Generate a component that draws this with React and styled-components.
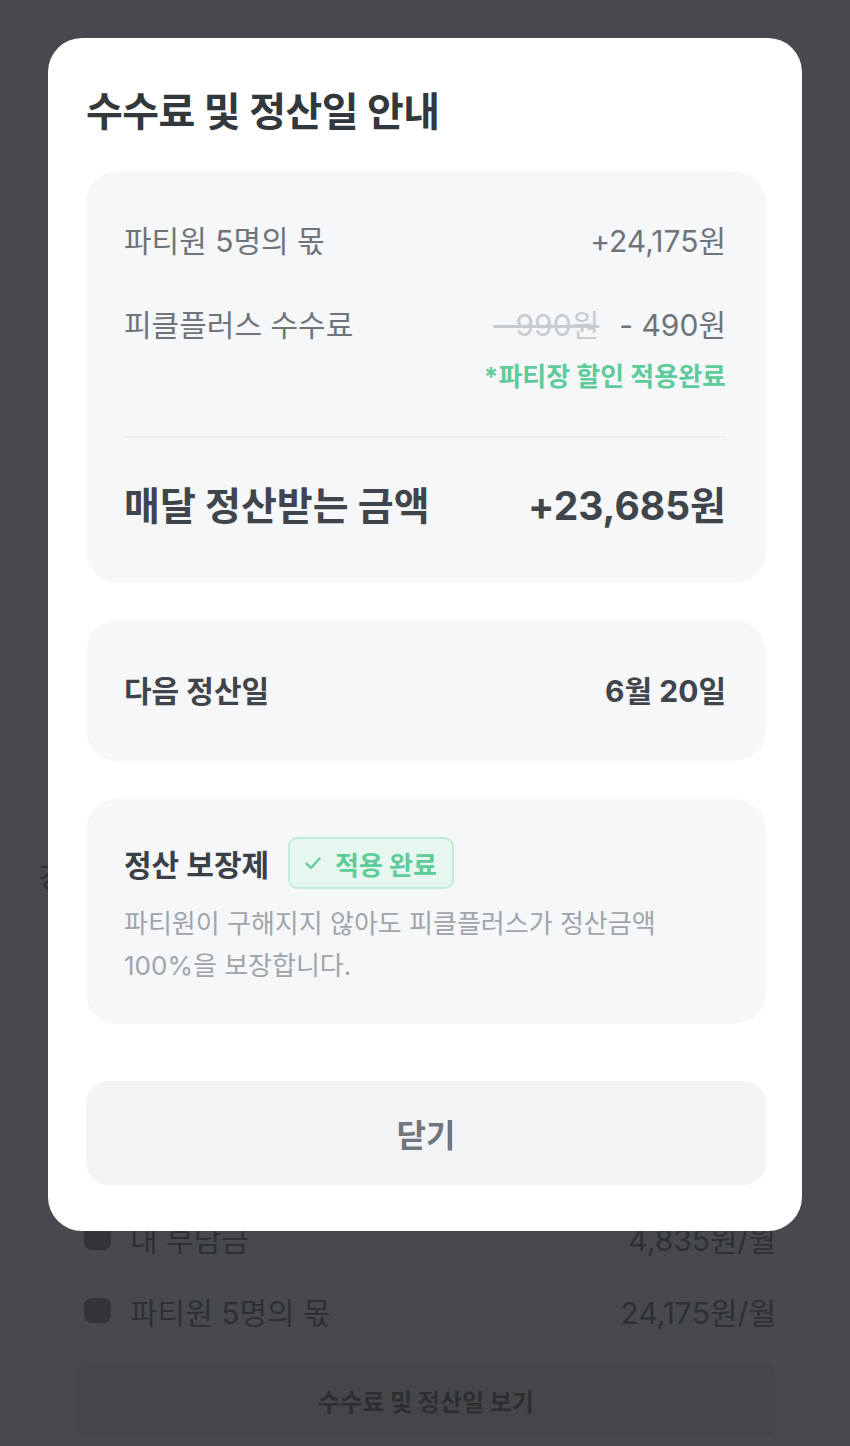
import React from "react";
import styled, { createGlobalStyle } from "styled-components";

const GlobalStyle = createGlobalStyle`
    html, body {
        margin: 0;
        padding: 0;
        background: #48494e;
    }
    body {
        font-family: "Inter", "Noto Sans CJK KR", sans-serif;
        -webkit-font-smoothing: antialiased;
    }
`;

const Page = styled.div`
    min-height: 1446px;
    box-sizing: border-box;
    display: flex;
    flex-direction: column;
    justify-content: flex-end;
    padding: 0 74px 8px 76px;
    background: #48494e;
`;

const BehindRow = styled.div`
    display: flex;
    align-items: center;
    justify-content: space-between;
    height: 73px;
    font-size: 30px;
    color: #2f3034;
`;

const BehindLabel = styled.div`
    display: flex;
    align-items: center;
    gap: 19px;
    padding-left: 8px;
`;

const Dot = styled.span`
    width: 27px;
    height: 25px;
    border-radius: 8px;
    background: #333438;
`;

const BehindButton = styled.div`
    margin-top: 16px;
    height: 75px;
    border-radius: 14px;
    background: #45464a;
    display: flex;
    align-items: center;
    justify-content: center;
    font-size: 24px;
    font-weight: 700;
    color: #2d2e31;
`;

const Peek = styled.div`
    position: absolute;
    left: 38px;
    top: 856px;
    font-size: 28px;
    color: #2f3034;
`;

const Modal = styled.div`
    position: fixed;
    top: 38px;
    left: 48px;
    width: 754px;
    box-sizing: border-box;
    padding: 52px 36px 46px 38px;
    background: #ffffff;
    border-radius: 34px;
    display: flex;
    flex-direction: column;
`;

const Title = styled.h1`
    margin: 0 0 37px;
    font-size: 40px;
    line-height: 44px;
    font-weight: 700;
    color: #33383d;
    letter-spacing: -0.5px;
`;

const Card = styled.div`
    background: #f6f7f9;
    border-radius: 32px;
    padding: ${(p) => p.$pad || "0 40px 0 38px"};
    margin-bottom: ${(p) => p.$gap || "0"};
    min-height: ${(p) => p.$h || "auto"};
    box-sizing: border-box;
    display: flex;
    flex-direction: column;
    justify-content: center;
`;

const Row = styled.div`
    display: flex;
    align-items: center;
    justify-content: space-between;
    font-size: ${(p) => p.$size || "30px"};
    line-height: ${(p) => p.$lh || "36px"};
    font-weight: ${(p) => (p.$bold ? 700 : 400)};
    color: ${(p) => p.$color || "#6f747a"};
    margin-top: ${(p) => p.$mt || "0"};
`;

const FeeValues = styled.div`
    display: flex;
    align-items: center;
    gap: 20px;
`;

const Strike = styled.span`
    color: #c7ccd0;
    text-decoration: line-through;
    text-decoration-color: #c7ccd0;
`;

const Note = styled.div`
    margin-top: 19px;
    text-align: right;
    font-size: 26px;
    line-height: 30px;
    font-weight: 700;
    color: #5ecb9b;
`;

const Divider = styled.hr`
    border: none;
    height: 2px;
    background: #eef0f2;
    margin: 44px 0 44px;
`;

const GuaranteeHead = styled.div`
    display: flex;
    align-items: center;
    gap: 19px;
`;

const GuaranteeTitle = styled.span`
    font-size: 30px;
    font-weight: 700;
    color: #3b4046;
`;

const Badge = styled.span`
    display: inline-flex;
    align-items: center;
    gap: 12px;
    height: 52px;
    box-sizing: border-box;
    padding: 0 15px 0 13px;
    border: 2px solid #c3ebd9;
    border-radius: 9px;
    background: #e6f7ef;
    color: #5ecb9b;
    font-size: 26px;
    font-weight: 700;
`;

const Desc = styled.p`
    margin: 14px 0 0;
    font-size: 26px;
    line-height: 42px;
    color: #a0a5aa;
`;

const CloseButton = styled.button`
    margin-top: 57px;
    height: 104px;
    border: none;
    border-radius: 22px;
    background: #f2f4f6;
    font-family: inherit;
    font-size: 32px;
    font-weight: 700;
    color: #70767c;
    cursor: pointer;
`;

const Check = () => (
    <svg width="20" height="20" viewBox="0 0 20 20" fill="none">
        <path d="M3.5 10.5 L8 15 L16.5 5.5" stroke="#5ecb9b" strokeWidth="2.2" strokeLinecap="round" strokeLinejoin="round" />
    </svg>
);

const App = () => {
    return (
        <>
            <GlobalStyle />
            <Page>
                <Peek>경</Peek>
                <BehindRow>
                    <BehindLabel><Dot />내 부담금</BehindLabel>
                    <span>4,835원/월</span>
                </BehindRow>
                <BehindRow>
                    <BehindLabel><Dot />파티원 5명의 몫</BehindLabel>
                    <span>24,175원/월</span>
                </BehindRow>
                <BehindButton>수수료 및 정산일 보기</BehindButton>
            </Page>

            <Modal>
                <Title>수수료 및 정산일 안내</Title>

                <Card $pad="52px 40px 53px 38px" $gap="37px">
                    <Row>
                        <span>파티원 5명의 몫</span>
                        <span>+24,175원</span>
                    </Row>
                    <Row $mt="48px">
                        <span>피클플러스 수수료</span>
                        <FeeValues>
                            <Strike>- 990원</Strike>
                            <span>- 490원</span>
                        </FeeValues>
                    </Row>
                    <Note>*파티장 할인 적용완료</Note>
                    <Divider />
                    <Row $size="39px" $lh="48px" $bold $color="#40454b">
                        <span>매달 정산받는 금액</span>
                        <span>+23,685원</span>
                    </Row>
                </Card>

                <Card $h="141px" $gap="38px">
                    <Row $bold $color="#40454b">
                        <span>다음 정산일</span>
                        <span>6월 20일</span>
                    </Row>
                </Card>

                <Card $pad="38px 40px 37px 38px">
                    <GuaranteeHead>
                        <GuaranteeTitle>정산 보장제</GuaranteeTitle>
                        <Badge><Check />적용 완료</Badge>
                    </GuaranteeHead>
                    <Desc>
                        파티원이 구해지지 않아도 피클플러스가 정산금액<br />
                        100%을 보장합니다.
                    </Desc>
                </Card>

                <CloseButton>닫기</CloseButton>
            </Modal>
        </>
    );
};

export default App;
